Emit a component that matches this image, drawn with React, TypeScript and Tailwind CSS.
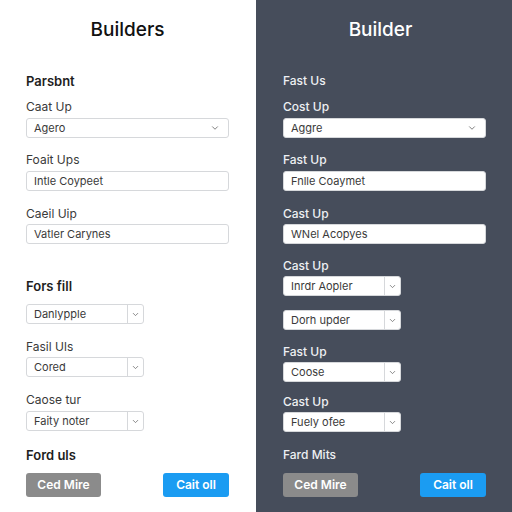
import { LuChevronDown } from "react-icons/lu";

function Label(props: { text: string, dark?: boolean, className?: string }) {
    return (
        <div
            className={
                "text-[12px] leading-[16px] " +
                (props.dark ? "text-[#eef0f3] font-medium " : "text-[#3a3a3a] ") +
                (props.className ?? "")}>
            {props.text}
        </div>
    );
}

function Section(props: { text: string, dark?: boolean, className?: string }) {
    return (
        <div
            className={
                "text-[13px] leading-[16px] font-semibold " +
                (props.dark ? "text-[#eef0f3] " : "text-[#1e1e1e] ") +
                (props.className ?? "")}>
            {props.text}
        </div>
    );
}

function Input(props: { value: string, chevron?: boolean, className?: string }) {
    return (
        <div
            className={
                "flex items-center justify-between h-[20px] bg-white border border-[#d6d8db] rounded-[3px] pl-[7px] pr-[8px] text-[11px] text-[#3a3a3a] " +
                (props.className ?? "")}>
            <span>{props.value}</span>
            {props.chevron && <LuChevronDown className="w-[10px] h-[10px] text-[#666]" />}
        </div>
    );
}

function SplitSelect(props: { value: string, className?: string }) {
    return (
        <div
            className={
                "flex items-center h-[20px] w-[118px] bg-white border border-[#d6d8db] rounded-[3px] text-[11px] text-[#3a3a3a] " +
                (props.className ?? "")}>
            <span className="flex-1 pl-[7px]">{props.value}</span>
            <span className="w-[16px] h-full border-l border-[#d6d8db] flex items-center justify-center">
                <LuChevronDown className="w-[9px] h-[9px] text-[#666]" />
            </span>
        </div>
    );
}

function Buttons(props: { className?: string }) {
    return (
        <div className={"flex justify-between " + (props.className ?? "")}>
            <button className="w-[75px] h-[24px] rounded-[3px] bg-[#8b8b8b] text-white text-[12px] font-semibold">
                Ced Mire
            </button>
            <button className="w-[66px] h-[24px] rounded-[3px] bg-[#1b9cf2] text-white text-[12px] font-semibold">
                Cait oll
            </button>
        </div>
    );
}

export default function App() {
    return (
        <div
            className="flex w-[512px] h-[512px] overflow-hidden"
            style={{ fontFamily: "Inter, 'Noto Sans', sans-serif" }}>
            <div className="w-[256px] bg-white flex flex-col pl-[26px] pr-[27px] pt-[18px]">
                <h1 className="text-center text-[19px] leading-[24px] font-medium text-[#111]">Builders</h1>
                <Section text="Parsbnt" className="mt-[31px]" />
                <Label text="Caat Up" className="mt-[10px]" />
                <Input value="Agero" chevron className="mt-[3px]" />
                <Label text="Foait Ups" className="mt-[14px]" />
                <Input value="Intle Coypeet" className="mt-[3px]" />
                <Label text="Caeil Uip" className="mt-[15px]" />
                <Input value="Vatler Carynes" className="mt-[2px]" />
                <Section text="Fors fill" className="mt-[34px]" />
                <SplitSelect value="Danlypple" className="mt-[10px]" />
                <Label text="Fasil Uls" className="mt-[15px]" />
                <SplitSelect value="Cored" className="mt-[2px]" />
                <Label text="Caose tur" className="mt-[15px]" />
                <SplitSelect value="Faity noter" className="mt-[3px]" />
                <Section text="Ford uls" className="mt-[16px]" />
                <Buttons className="mt-[10px]" />
            </div>
            <div className="w-[256px] bg-[#464d5b] flex flex-col pl-[27px] pr-[26px] pt-[18px]">
                <h1 className="text-center text-[19px] leading-[24px] font-medium text-white pr-[8px]">Builder</h1>
                <Label dark text="Fast Us" className="mt-[31px]" />
                <Label dark text="Cost Up" className="mt-[10px]" />
                <Input value="Aggre" chevron className="mt-[3px]" />
                <Label dark text="Fast Up" className="mt-[14px]" />
                <Input value="Fnlle Coaymet" className="mt-[3px]" />
                <Label dark text="Cast Up" className="mt-[15px]" />
                <Input value="WNel Acopyes" className="mt-[2px]" />
                <Label dark text="Cast Up" className="mt-[14px]" />
                <SplitSelect value="Inrdr Aopler" className="mt-[2px]" />
                <SplitSelect value="Dorh upder" className="mt-[14px]" />
                <Label dark text="Fast Up" className="mt-[14px]" />
                <SplitSelect value="Coose" className="mt-[2px]" />
                <Label dark text="Cast Up" className="mt-[12px]" />
                <SplitSelect value="Fuely ofee" className="mt-[2px]" />
                <Label dark text="Fard Mits" className="mt-[15px]" />
                <Buttons className="mt-[10px]" />
            </div>
        </div>
    );
}
